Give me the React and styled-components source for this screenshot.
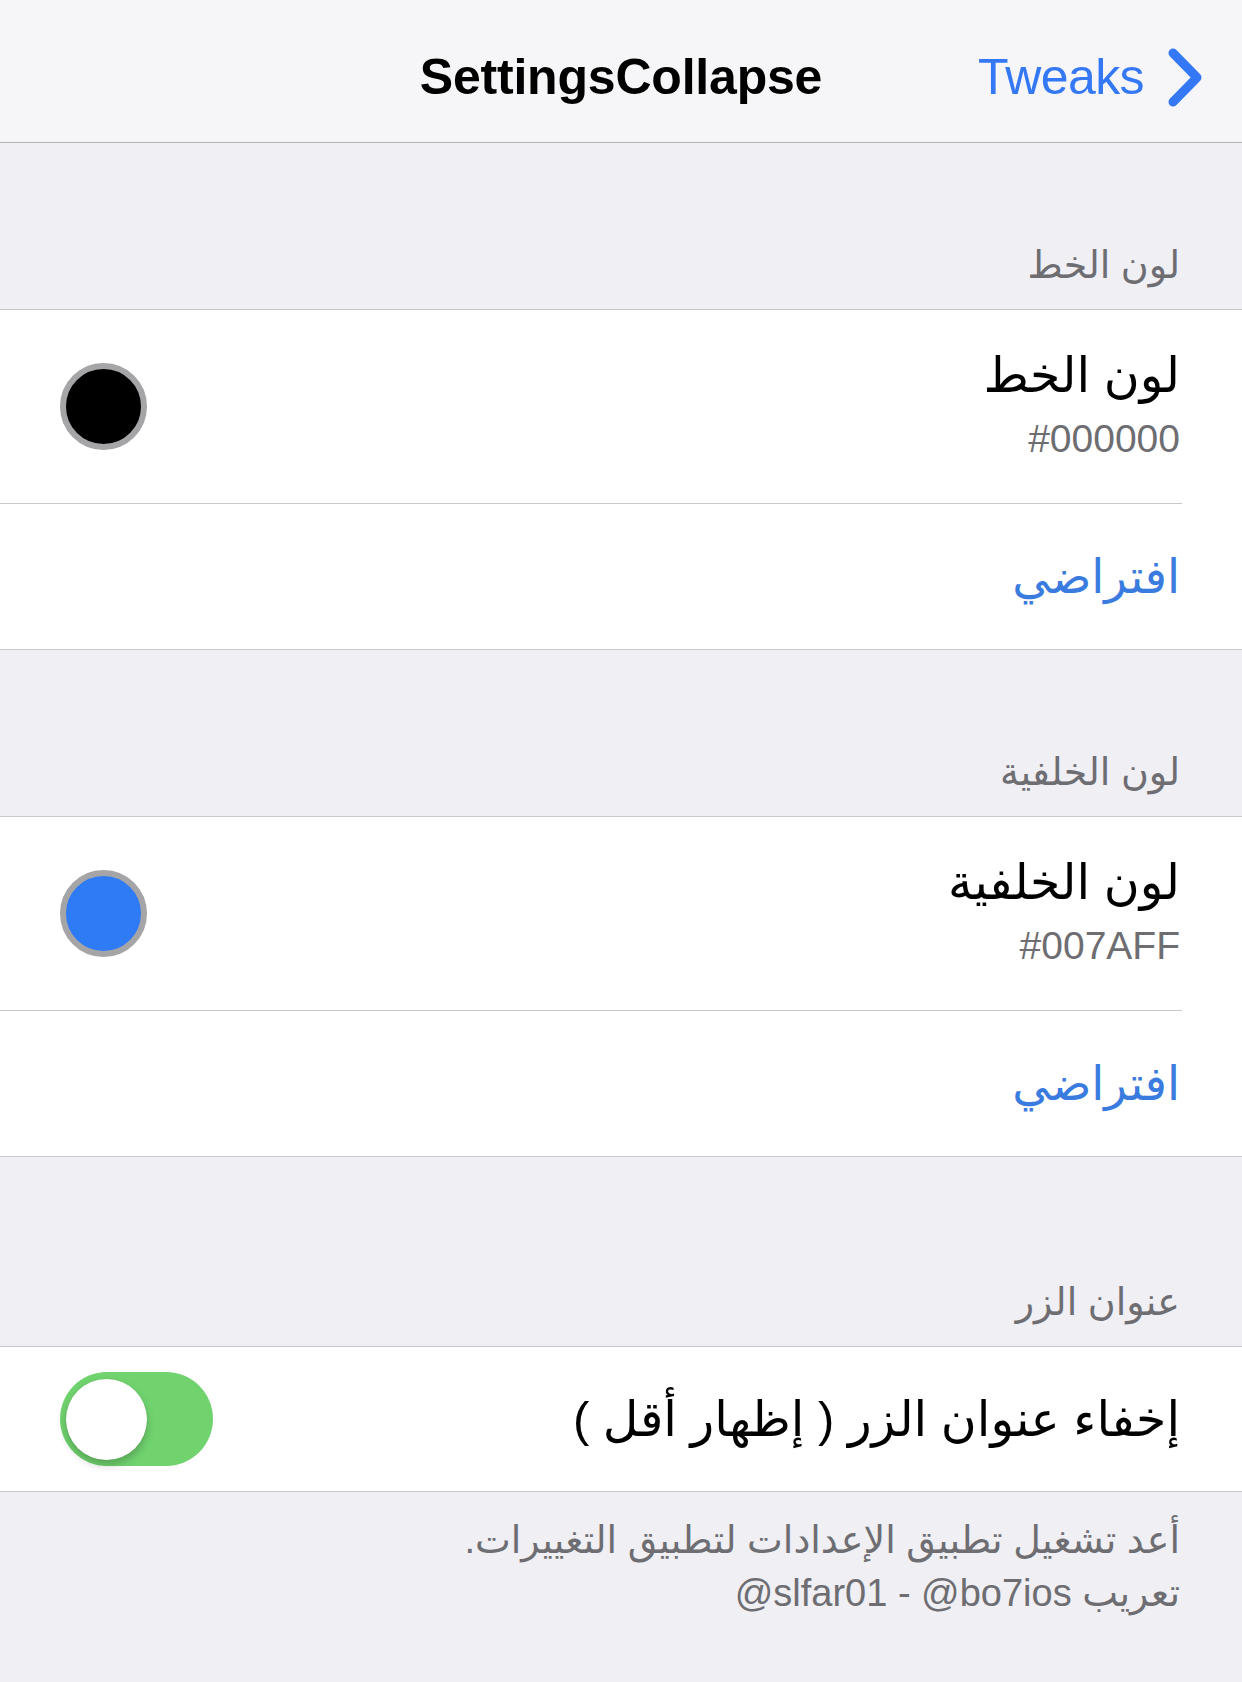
import React from "react";
import styled, { createGlobalStyle } from "styled-components";

const GlobalStyle = createGlobalStyle`
  html, body {
    margin: 0;
    padding: 0;
    background: #efeff4;
  }
  body {
    font-family: "Liberation Sans", "DejaVu Sans", sans-serif;
    -webkit-font-smoothing: antialiased;
  }
`;

const Page = styled.div`
  width: 1242px;
  min-height: 1682px;
  background: #efeff4;
`;

const NavBar = styled.div`
  height: 130px;
  padding-top: 12px;
  display: grid;
  grid-template-columns: 1fr auto 1fr;
  align-items: center;
  background: #f6f6f8;
  border-bottom: 1px solid #b3b3b7;
`;

const NavTitle = styled.div`
  grid-column: 2;
  font-size: 50px;
  font-weight: 700;
  color: #000;
  letter-spacing: -0.2px;
`;

const NavLink = styled.div`
  grid-column: 3;
  justify-self: end;
  display: flex;
  align-items: center;
  gap: 23px;
  padding-right: 39px;
  font-size: 50px;
  color: #3478f6;
  letter-spacing: -0.6px;
`;

const SectionHeader = styled.div`
  height: ${(p) => (p.$tall ? 189 : 166)}px;
  box-sizing: border-box;
  display: flex;
  align-items: flex-end;
  padding: 0 62px 21px 62px;
  font-size: 38px;
  line-height: 46px;
  color: #6d6d72;
`;

const Group = styled.div`
  background: #fff;
  border-top: 1px solid #c8c7cc;
  border-bottom: 1px solid #c8c7cc;
`;

const Cell = styled.div`
  height: ${(p) => p.$height}px;
  display: flex;
  align-items: center;
  justify-content: space-between;
  padding: 0 62px 0 60px;
`;

const Divider = styled.div`
  height: 1px;
  background: #c8c7cc;
  margin-right: 60px;
`;

const TextCol = styled.div`
  display: flex;
  flex-direction: column;
  gap: 14px;
  padding-bottom: 6px;
`;

const Title = styled.div`
  font-size: ${(p) => (p.$link ? 47 : 49)}px;
  line-height: 56px;
  color: ${(p) => (p.$link ? "#3a7be0" : "#000")};
`;

const Subtitle = styled.div`
  font-size: 39px;
  line-height: 44px;
  color: #6d6d72;
  direction: ltr;
  text-align: right;
`;

const Swatch = styled.div`
  width: 75px;
  height: 75px;
  border-radius: 50%;
  border: 6px solid #a5a5a8;
  background: ${(p) => p.$color};
`;

const Toggle = styled.div`
  width: 153px;
  height: 94px;
  border-radius: 47px;
  background: #70d36e;
  position: relative;
`;

const Knob = styled.div`
  position: absolute;
  left: 6px;
  top: 7px;
  width: 81px;
  height: 81px;
  border-radius: 50%;
  background: #fff;
  box-shadow: 0 5px 9px rgba(0, 0, 0, 0.22), 0 0 1px rgba(0, 0, 0, 0.15);
`;

const Footer = styled.div`
  padding: 22px 62px 0 62px;
  font-size: 38px;
  line-height: 53px;
  color: #6d6d72;
`;

const Ltr = styled.span`
  direction: ltr;
  unicode-bidi: isolate;
`;

function Chevron() {
  return (
    <svg width="36" height="61" viewBox="0 0 36 61">
      <path
        d="M6 6 L30 30.5 L6 55"
        fill="none"
        stroke="#3478f6"
        strokeWidth="9"
        strokeLinecap="round"
        strokeLinejoin="round"
      />
    </svg>
  );
}

function ColorSection({ label, hex, color }) {
  return (
    <>
      <SectionHeader>{label}</SectionHeader>
      <Group>
        <Cell $height={193}>
          <TextCol>
            <Title>{label}</Title>
            <Subtitle>{hex}</Subtitle>
          </TextCol>
          <Swatch $color={color} />
        </Cell>
        <Divider />
        <Cell $height={145}>
          <Title $link>افتراضي</Title>
        </Cell>
      </Group>
    </>
  );
}

export default function App() {
  return (
    <>
      <GlobalStyle />
      <Page>
        <NavBar>
          <NavTitle>SettingsCollapse</NavTitle>
          <NavLink>
            Tweaks
            <Chevron />
          </NavLink>
        </NavBar>
        <div dir="rtl">
          <ColorSection label="لون الخط" hex="#000000" color="#000" />
          <ColorSection label="لون الخلفية" hex="#007AFF" color="#2f7bf5" />
          <SectionHeader $tall>عنوان الزر</SectionHeader>
          <Group>
            <Cell $height={144}>
              <Title>إخفاء عنوان الزر ( إظهار أقل )</Title>
              <Toggle>
                <Knob />
              </Toggle>
            </Cell>
          </Group>
          <Footer>
            <div>أعد تشغيل تطبيق الإعدادات لتطبيق التغييرات.</div>
            <div>
              تعريب <Ltr>@slfar01 - @bo7ios</Ltr>
            </div>
          </Footer>
        </div>
      </Page>
    </>
  );
}
